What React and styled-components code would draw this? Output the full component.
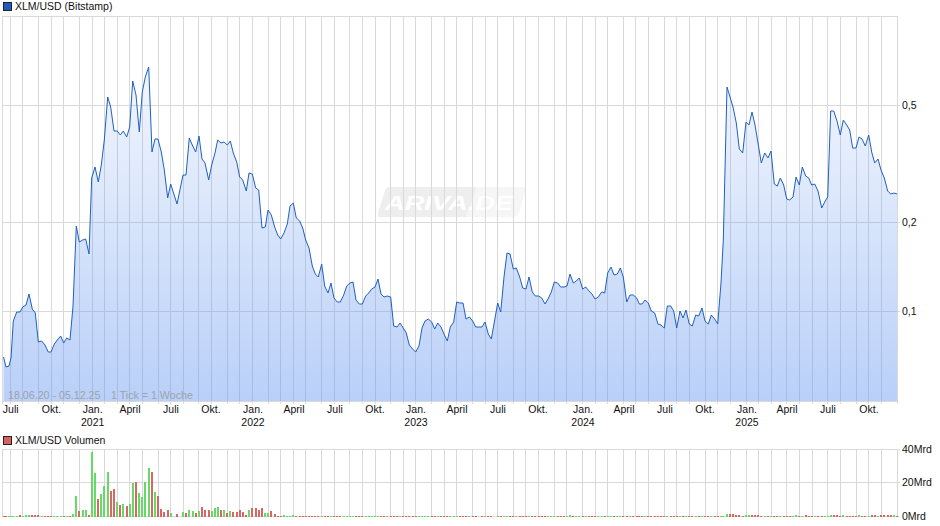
import React from 'react'
import styled, { createGlobalStyle } from 'styled-components'

const GlobalStyle = createGlobalStyle`
  html, body {
    margin: 0;
    padding: 0;
    background: #fff;
  }
`

const Page = styled.div`
  width: 940px;
  height: 526px;
  display: flex;
  flex-direction: column;
  overflow: hidden;
  font-family: "Liberation Sans", Arial, sans-serif;
  font-size: 10.5px;
  color: #111;
`

const Legend = styled.div`
  height: 14px;
  display: flex;
  align-items: flex-start;
  gap: 3px;
  padding-left: 3px;
`

const Swatch = styled.span`
  width: 7px;
  height: 7px;
  margin-top: 2px;
  border: 1px solid #222;
  background: ${(p) => p.$color};
`

const LegendLabel = styled.span`
  line-height: 12px;
`

const ChartSvg = styled.svg`
  display: block;
  flex: none;
  overflow: visible;
`

const GridLine = styled.line`
  stroke: #d9d9d9;
  stroke-width: 1;
`

const AxisText = styled.text`
  font-family: "Liberation Sans", Arial, sans-serif;
  font-size: 10.5px;
  fill: #111;
`

const RangeText = styled.text`
  font-family: "Liberation Sans", Arial, sans-serif;
  font-size: 10.67px;
  fill: #9ea2aa;
`

const WatermarkText = styled.text`
  font-family: "Liberation Sans", Arial, sans-serif;
  font-size: 21px;
  font-weight: bold;
  font-style: italic;
  fill: #fff;
`

const PriceLine = styled.polyline`
  fill: none;
  stroke: #2060c0;
  stroke-width: 1;
  stroke-linejoin: round;
`

const VolumeBar = styled.rect`
  fill: ${(p) => (p.$up ? '#66d966' : '#d96666')};
`

const GRID_X = [
  2, 10, 22, 38, 51, 63, 79, 92, 104, 117, 129, 142, 158, 170, 183, 198, 211, 227, 239, 252, 268, 280, 293, 305,
  321, 334, 349, 362, 375, 390, 403, 415, 431, 444, 456, 472, 485, 497, 513, 525, 538, 554, 566, 582, 595, 607,
  623, 635, 648, 664, 676, 689, 705, 717, 730, 746, 758, 771, 786, 799, 812, 827, 840, 856, 868, 881, 897,
]

const MONTHS = [
  ['Juli', 10.7], ['Okt.', 51.5], ['Jan.', 92.7, '2021'], ['April', 130], ['Juli', 171], ['Okt.', 211],
  ['Jan.', 253, '2022'], ['April', 294], ['Juli', 335], ['Okt.', 375], ['Jan.', 416, '2023'], ['April', 457],
  ['Juli', 498], ['Okt.', 538], ['Jan.', 583, '2024'], ['April', 624], ['Juli', 665], ['Okt.', 705],
  ['Jan.', 747, '2025'], ['April', 787], ['Juli', 828], ['Okt.', 869],
]

const PRICE = [
  [3.5, 357], [6, 367], [9, 366], [11, 358], [13.3, 321], [16.7, 312], [20, 312], [22.7, 307], [26, 305], [29, 294],
  [32.3, 309], [35.3, 313], [38.3, 342], [41.7, 341], [45, 345], [48.3, 352], [51, 352], [54.3, 344], [57.3, 340],
  [60.7, 336], [63.7, 343], [66.7, 338], [70, 340], [73, 306], [76.3, 226], [79.3, 242], [82.7, 240], [85.7, 239],
  [89, 254], [91.7, 178], [95, 167], [98.3, 182], [101.3, 165], [104.3, 140], [107.7, 97], [110.7, 107], [114, 131],
  [117.3, 131], [120.3, 135], [123.3, 131], [126.7, 137], [129.7, 127], [132.7, 81], [136, 95], [139.3, 132],
  [142.3, 92], [145.3, 77], [148.7, 67], [152, 152], [155, 139], [158, 139], [161.3, 152], [164.3, 170], [167.7, 198],
  [170.7, 184], [177, 204], [183, 175], [186, 175], [189.3, 138], [192.7, 146], [195.7, 152], [199, 136], [202, 159],
  [205, 163], [208.7, 180], [211.7, 165], [215, 153], [217.7, 140], [221, 143], [224, 142], [227.3, 145], [230.3, 141],
  [233.3, 153], [236.7, 162], [239.7, 177], [242.7, 180], [246.3, 191], [249, 173], [252.3, 174], [255.7, 188],
  [258.7, 190], [262, 228], [265.3, 227], [268, 210], [271.3, 215], [274.7, 227], [277.7, 235], [280.7, 239],
  [284, 233], [287.3, 224], [290, 206], [293.3, 203], [296.3, 218], [299.7, 221], [302.7, 228], [305.7, 240],
  [309, 248], [312.3, 266], [315.3, 274], [318.3, 277], [321.7, 264], [324.7, 286], [328, 293], [331, 283], [334, 298],
  [337.3, 302], [340.3, 302], [343.7, 295], [346.7, 286], [350, 283], [353, 282], [356, 300], [359.3, 304], [362.3, 304],
  [365.7, 296], [368.7, 293], [371.7, 289], [375, 287], [378, 279], [381, 294], [384, 297], [387.3, 296], [390.7, 297],
  [393.7, 326], [397, 327], [400, 323], [403.3, 328], [406.3, 333], [409.3, 345], [412.7, 349], [415.7, 352], [419, 346],
  [422, 328], [425, 321], [428.3, 319], [431.7, 322], [434.7, 329], [437.7, 323], [441, 327], [444, 334], [447.3, 341],
  [450.3, 327], [453.7, 322], [456.7, 302], [459.7, 303], [463, 303], [466, 319], [469.3, 317], [472.7, 321], [475.7, 327],
  [482, 327], [485, 322], [488.3, 334], [491.3, 339], [497.7, 303], [500.7, 312], [504, 277], [507, 253], [510, 254],
  [513.3, 269], [516.3, 268], [519.7, 277], [522.7, 288], [526, 289], [529, 277], [532.3, 292], [535.3, 296], [538.7, 296],
  [541.7, 298], [545, 304], [548, 299], [551.3, 292], [554.3, 282], [557.7, 283], [560.7, 287], [564, 287], [567, 286],
  [570, 274], [573.3, 283], [576.3, 281], [579.3, 278], [582.7, 289], [585.7, 287], [589, 291], [592, 294], [595, 299],
  [598.3, 297], [601.7, 292], [604.7, 293], [607.7, 273], [611, 267], [614, 275], [617.3, 274], [620.3, 268], [623.3, 277],
  [626.7, 302], [630, 295], [633.3, 295], [636.7, 298], [639.3, 304], [642, 304], [645, 300], [648.3, 303], [651.3, 311],
  [654.7, 313], [658, 324], [661, 325], [664.3, 328], [667.3, 306], [670.7, 306], [673.7, 311], [676.7, 328], [680, 311],
  [683, 318], [686, 310], [689.3, 324], [692.3, 326], [695.7, 315], [698.7, 316], [702, 308], [705, 321], [708.3, 324],
  [711.3, 315], [714.7, 319], [717.7, 324], [721, 283], [723.3, 240], [727, 87], [730, 97], [733, 107], [736.3, 123],
  [739.3, 149], [742.7, 153], [746, 122], [749, 125], [752, 112], [755, 125], [758, 143], [761.3, 163], [764.7, 153],
  [768, 158], [771, 151], [774.3, 184], [777.3, 186], [780.3, 178], [783.7, 185], [786.7, 199], [789.7, 200], [793, 197],
  [796, 177], [799.3, 185], [802.3, 167], [805.7, 176], [808.7, 178], [811.7, 185], [814.7, 184], [818, 191], [821.7, 208],
  [824.7, 202], [827.7, 197], [830.7, 111], [833.7, 111], [837, 121], [840.3, 135], [843.3, 120], [846.7, 125], [849.7, 130],
  [852.7, 148], [856, 148], [859, 137], [862, 139], [865.3, 146], [868.7, 135], [871.7, 152], [874.7, 163], [878, 159],
  [881, 170], [884.3, 178], [887.7, 191], [890.7, 194], [894, 193], [897, 194],
]

// [x * 3 as read off the chart, height, up]
const VOLUME_PEAKS = [
  [57, 2, 0], [75, 2, 1], [84, 2, 1], [93, 2, 0], [102, 2, 0], [111, 2, 0],
  [219, 3, 1], [228, 21, 1], [237, 6, 0], [246, 7, 1], [255, 7, 1], [264, 2, 0], [275, 65, 1], [285, 44, 1], [294, 18, 0],
  [303, 23, 1], [312, 31, 1], [321, 45, 1], [330, 26, 0], [342, 28, 0], [351, 15, 1], [360, 12, 0], [369, 13, 1],
  [378, 11, 0], [387, 13, 1], [396, 34, 1], [408, 35, 0], [417, 24, 1], [426, 20, 1], [435, 35, 1], [444, 49, 1],
  [453, 45, 0], [462, 25, 1], [474, 21, 0], [483, 8, 0], [492, 5, 0], [501, 7, 0], [510, 4, 1], [519, 2, 0], [528, 3, 0],
  [540, 4, 1], [549, 5, 1], [558, 4, 0], [567, 7, 1], [576, 6, 1], [585, 4, 0], [594, 6, 1], [606, 10, 0], [615, 7, 0],
  [624, 7, 0], [633, 6, 1], [642, 9, 1], [651, 10, 1], [660, 7, 0], [672, 7, 1], [681, 4, 0], [690, 6, 1], [699, 5, 0],
  [708, 5, 0], [717, 7, 0], [729, 5, 0], [738, 2, 0], [747, 7, 1], [756, 9, 0], [765, 9, 0], [774, 7, 0], [783, 9, 0],
  [795, 4, 1], [804, 4, 1], [813, 6, 0], [822, 3, 0], [831, 1, 0], [849, 2, 1], [879, 2, 1],
  [1707, 2, 1], [2182, 3, 1], [2191, 3, 0], [2200, 3, 0], [2209, 2, 0], [2218, 2, 0], [2238, 2, 1], [2247, 2, 1], [2256, 2, 0],
  [2265, 2, 0], [2274, 2, 0], [2388, 2, 1], [2415, 2, 0], [2490, 2, 1], [2500, 2, 0], [2510, 2, 0], [2529, 2, 1], [2577, 2, 1],
  [2613, 2, 0], [2622, 2, 0], [2640, 2, 0], [2649, 2, 0], [2658, 2, 0], [2667, 2, 0], [2676, 2, 0], [2680, 2, 1],
].map(([z, h, up]) => ({ x: Math.round(z / 3 - 1), h, up: !!up }))

const VOLUMES = PRICE.map(([x, y], i) => {
  const left = Math.round(x - 1)
  const peak = VOLUME_PEAKS.find((v) => Math.abs(v.x - left) <= 1)
  if (peak) return { ...peak, x: left }
  return { x: left, h: 1, up: i > 0 && y < PRICE[i - 1][1] }
})

const linePoints = PRICE.map(([x, y]) => `${x},${y}`).join(' ')
const areaPoints = `3.5,401 ${linePoints} 897,401`

function VerticalGrid({ top, bottom }) {
  return GRID_X.map((x) => <GridLine key={x} x1={x + 0.5} x2={x + 0.5} y1={top} y2={bottom} />)
}

function PriceChart() {
  return (
    <ChartSvg width="940" height="420" viewBox="0 14 940 420">
      <defs>
        <linearGradient id="priceFill" gradientUnits="userSpaceOnUse" x1="0" y1="67" x2="0" y2="401">
          <stop offset="0" stopColor="#6496f0" stopOpacity="0.08" />
          <stop offset="1" stopColor="#6496f0" stopOpacity="0.45" />
        </linearGradient>
      </defs>

      <path d="M390 187 H522 Q526 187 525 191 L519 213 Q518 217 514 217 H381 Q377 217 378 213 L385 191 Q386 187 390 187 Z" fill="#f6f6f6" />
      <path d="M390 187 H477 L466 217 H381 Q377 217 378 213 L385 191 Q386 187 390 187 Z" fill="#eeeeee" />
      <WatermarkText x="385" y="210" textLength="128" lengthAdjust="spacingAndGlyphs">ARIVA.DE</WatermarkText>

      <VerticalGrid top={16} bottom={401} />
      {GRID_X.map((x) => (
        <GridLine key={x} x1={x + 0.5} x2={x + 0.5} y1={401} y2={404} />
      ))}
      {[16, 105, 222, 311].map((y) => (
        <GridLine key={y} x1={2} x2={y === 16 ? 898 : 900} y1={y + 0.5} y2={y + 0.5} />
      ))}

      <polygon points={areaPoints} fill="url(#priceFill)" />
      <PriceLine points={linePoints} />
      <GridLine x1={2} x2={898} y1={401.5} y2={401.5} />

      <RangeText x="8" y="399">18.06.20 - 05.12.25</RangeText>
      <RangeText x="111" y="399">1 Tick = 1 Woche</RangeText>

      {MONTHS.map(([label, x, year]) => (
        <React.Fragment key={x}>
          <AxisText x={x} y="413" textAnchor="middle">{label}</AxisText>
          {year && <AxisText x={x} y="426" textAnchor="middle">{year}</AxisText>}
        </React.Fragment>
      ))}

      <AxisText x="902" y="109">0,5</AxisText>
      <AxisText x="902" y="226">0,2</AxisText>
      <AxisText x="902" y="315">0,1</AxisText>
    </ChartSvg>
  )
}

function VolumeChart() {
  return (
    <ChartSvg width="940" height="78" viewBox="0 448 940 78">
      <VerticalGrid top={449} bottom={517} />
      {[449, 482, 516].map((y) => (
        <GridLine key={y} x1={2} x2={900} y1={y + 0.5} y2={y + 0.5} />
      ))}
      {VOLUMES.map((v) => (
        <VolumeBar key={v.x} x={v.x} y={517 - v.h} width="2" height={v.h} $up={v.up} />
      ))}
      <AxisText x="902" y="453">40Mrd</AxisText>
      <AxisText x="902" y="486">20Mrd</AxisText>
      <AxisText x="902" y="520">0Mrd</AxisText>
    </ChartSvg>
  )
}

export default function App() {
  return (
    <Page>
      <GlobalStyle />
      <Legend>
        <Swatch $color="#1f5bbd" />
        <LegendLabel>XLM/USD (Bitstamp)</LegendLabel>
      </Legend>
      <PriceChart />
      <Legend>
        <Swatch $color="#d96060" />
        <LegendLabel>XLM/USD Volumen</LegendLabel>
      </Legend>
      <VolumeChart />
    </Page>
  )
}
